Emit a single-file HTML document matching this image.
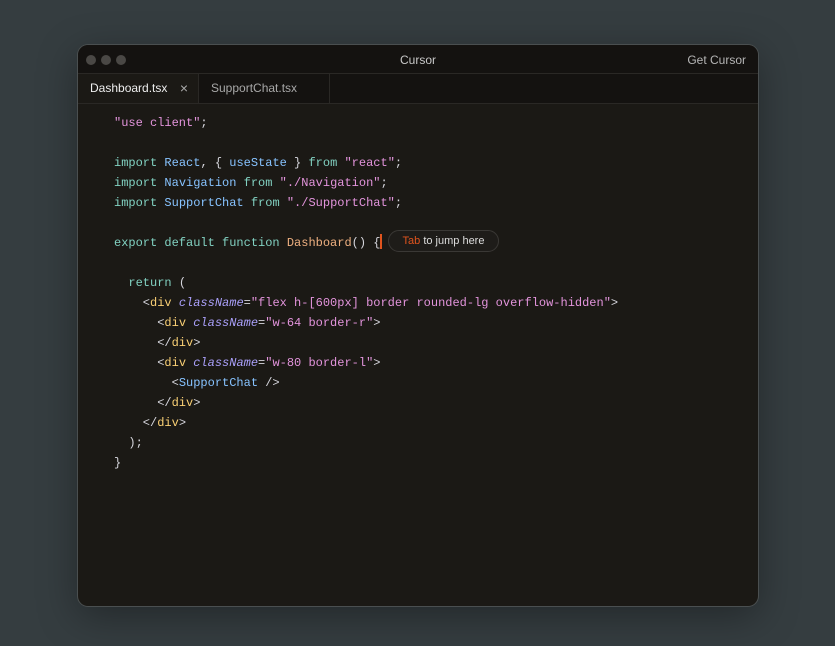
<!DOCTYPE html>
<html><head><style>
body{margin:0;width:835px;height:646px;background:#353d40;font-family:"Liberation Sans",sans-serif;position:relative;overflow:hidden}
.win{position:absolute;left:78px;top:45px;width:680px;height:561px;background:#1b1915;border-radius:10px;overflow:hidden;box-shadow:0 0 0 1px #4a4f50,0 10px 40px rgba(0,0,0,.35)}
.title{height:28px;background:#141210;border-bottom:1px solid #2a2825;position:relative;color:#c8c8c8;font-size:12px}
.dots{position:absolute;left:8px;top:9px}
.dots span{display:inline-block;width:10px;height:10px;border-radius:50%;background:#4a4845;margin-right:5px}
.title .c{position:absolute;left:0;right:0;top:8px;text-align:center}
.title .r{position:absolute;right:12px;top:8px;color:#b5b5b5}
.tabs{height:29px;background:#141210;border-bottom:1px solid #2a2825;position:relative;font-size:12px}
.tab{position:absolute;top:0;height:29px;line-height:29px;border-right:1px solid #2a2825}
.t1{left:0;width:121px;background:#1b1915;color:#eee;padding-left:12px;box-sizing:border-box}
.t1 .x{position:absolute;right:10px;top:0;color:#aaa;font-size:14px}
.t2{left:121px;width:131px;color:#a8a8a8;padding-left:12px;box-sizing:border-box}
pre{margin:0;position:absolute;left:36px;top:68px;font-family:"Liberation Mono",monospace;font-size:12px;line-height:20px;color:#d6d6dd;font-weight:normal}
.k{color:#82d2c2}.i{color:#87c3ff}.s{color:#e394dc}.f{color:#efb080}.g{color:#fad075}.a{color:#aaa0fa;font-style:italic}.p{color:#d6d6dd}
.cur{display:inline-block;width:2px;height:15px;background:#e0541e;vertical-align:-3px}
.hint{position:absolute;left:310px;top:185px;height:20px;width:109px;border:1px solid #3a3835;border-radius:11px;background:#1e1c19;font-size:11px;line-height:20px;color:#ddd;text-align:center;font-family:"Liberation Sans",sans-serif}
.hint b{color:#e0541e;font-weight:normal}
</style></head><body>
<div class="win">
<div class="title"><div class="dots"><span></span><span></span><span></span></div><div class="c">Cursor</div><div class="r">Get Cursor</div></div>
<div class="tabs"><div class="tab t1">Dashboard.tsx<span class="x">×</span></div><div class="tab t2">SupportChat.tsx</div></div>
<pre><span class="s">"use client"</span>;

<span class="k">import</span> <span class="i">React</span>, { <span class="i">useState</span> } <span class="k">from</span> <span class="s">"react"</span>;
<span class="k">import</span> <span class="i">Navigation</span> <span class="k">from</span> <span class="s">"./Navigation"</span>;
<span class="k">import</span> <span class="i">SupportChat</span> <span class="k">from</span> <span class="s">"./SupportChat"</span>;

<span class="k">export default function</span> <span class="f">Dashboard</span>() {<span class="cur"></span>

  <span class="k">return</span> (
    &lt;<span class="g">div</span> <span class="a">className</span>=<span class="s">"flex h-[600px] border rounded-lg overflow-hidden"</span>&gt;
      &lt;<span class="g">div</span> <span class="a">className</span>=<span class="s">"w-64 border-r"</span>&gt;
      &lt;/<span class="g">div</span>&gt;
      &lt;<span class="g">div</span> <span class="a">className</span>=<span class="s">"w-80 border-l"</span>&gt;
        &lt;<span class="i">SupportChat</span> /&gt;
      &lt;/<span class="g">div</span>&gt;
    &lt;/<span class="g">div</span>&gt;
  );
}</pre>
<div class="hint"><b>Tab</b> to jump here</div>
</div>
</body></html>
